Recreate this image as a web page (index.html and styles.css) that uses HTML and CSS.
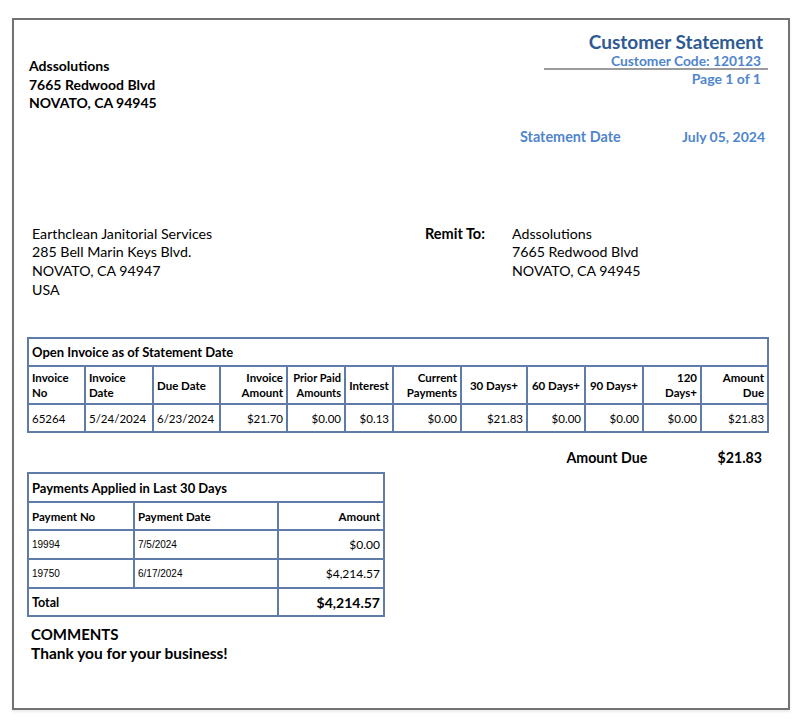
FILE: index.html
```html
<!DOCTYPE html>
<html lang="en">
<head>
<meta charset="utf-8">
<title>Customer Statement</title>
<link rel="stylesheet" href="styles.css">
</head>
<body>
<div class="page">
  <div class="head">
    <div class="from">
      <div>Adssolutions</div>
      <div>7665 Redwood Blvd</div>
      <div>NOVATO, CA 94945</div>
    </div>
    <div class="titlebox">
      <div class="title">Customer Statement</div>
      <div class="code">Customer Code: 120123</div>
      <div class="pageno">Page 1 of 1</div>
    </div>
  </div>
  <div class="daterow">
    <span class="dlabel">Statement Date</span>
    <span class="dval">July 05, 2024</span>
  </div>
  <div class="addrs">
    <div class="to">
      <div>Earthclean Janitorial Services</div>
      <div>285 Bell Marin Keys Blvd.</div>
      <div>NOVATO, CA 94947</div>
      <div>USA</div>
    </div>
    <div class="remit-label">Remit To:</div>
    <div class="remit">
      <div>Adssolutions</div>
      <div>7665 Redwood Blvd</div>
      <div>NOVATO, CA 94945</div>
    </div>
  </div>

  <table class="inv">
    <colgroup>
      <col class="c57"><col class="c68"><col class="c67"><col class="c67"><col class="c58"><col class="c48">
      <col class="c68"><col class="c66"><col class="c58"><col class="c58"><col class="c58"><col class="c67">
    </colgroup>
    <tr class="trow"><td colspan="12">Open Invoice as of Statement Date</td></tr>
    <tr class="hrow">
      <th class="l">Invoice<br>No</th>
      <th class="l">Invoice<br>Date</th>
      <th class="l">Due Date</th>
      <th class="r">Invoice<br>Amount</th>
      <th class="r small">Prior Paid<br>Amounts</th>
      <th class="c">Interest</th>
      <th class="r">Current<br>Payments</th>
      <th class="c">30 Days+</th>
      <th class="c">60 Days+</th>
      <th class="c">90 Days+</th>
      <th class="r">120<br>Days+</th>
      <th class="r">Amount<br>Due</th>
    </tr>
    <tr class="drow">
      <td class="l">65264</td>
      <td class="l">5/24/2024</td>
      <td class="l">6/23/2024</td>
      <td class="r">$21.70</td>
      <td class="r">$0.00</td>
      <td class="r">$0.13</td>
      <td class="r">$0.00</td>
      <td class="r">$21.83</td>
      <td class="r">$0.00</td>
      <td class="r">$0.00</td>
      <td class="r">$0.00</td>
      <td class="r">$21.83</td>
    </tr>
  </table>

  <div class="duerow">
    <span class="duelabel">Amount Due</span>
    <span class="dueval">$21.83</span>
  </div>

  <table class="pay">
    <colgroup><col class="p1"><col class="p2"><col class="p3"></colgroup>
    <tr class="trow"><td colspan="3">Payments Applied in Last 30 Days</td></tr>
    <tr class="phrow">
      <th class="l">Payment No</th>
      <th class="l">Payment Date</th>
      <th class="r">Amount</th>
    </tr>
    <tr class="prow">
      <td class="l arial">19994</td>
      <td class="l arial">7/5/2024</td>
      <td class="r">$0.00</td>
    </tr>
    <tr class="prow">
      <td class="l arial">19750</td>
      <td class="l arial">6/17/2024</td>
      <td class="r">$4,214.57</td>
    </tr>
    <tr class="totrow">
      <td class="l" colspan="2">Total</td>
      <td class="r">$4,214.57</td>
    </tr>
  </table>

  <div class="comments">
    <div class="ctitle">COMMENTS</div>
    <div class="ctext">Thank you for your business!</div>
  </div>
</div>
</body>
</html>
```

FILE: styles.css
```css
* { box-sizing: border-box; }
html, body { margin: 0; padding: 0; background: #fff; }
body {
  font-family: Lato, "Open Sans", sans-serif;
  color: #000;
  width: 800px;
  height: 726px;
}
.page {
  margin: 18px 0 0 12px;
  width: 778px;
  height: 692px;
  border: 2px solid #727272;
  box-shadow: 0 2px 2px rgba(0,0,0,0.08);
}
.head {
  display: flex;
  justify-content: space-between;
  align-items: flex-start;
}
.from {
  padding: 37px 0 0 15px;
  font-weight: 700;
  font-size: 14px;
  line-height: 18.5px;
}
.titlebox {
  width: 224px;
  margin-right: 20px;
  padding-top: 11px;
  text-align: right;
  font-weight: 700;
}
.title {
  color: #2f5b93;
  font-size: 19px;
  line-height: 22px;
  padding-right: 5px;
}
.code {
  color: #4f85cc;
  font-size: 13.8px;
  line-height: 15px;
  padding-right: 7px;
  border-bottom: 2px solid #9c9c9c;
}
.pageno {
  color: #4f85cc;
  font-size: 14px;
  line-height: 18px;
  padding-right: 7px;
}
.daterow {
  display: flex;
  justify-content: flex-end;
  margin-top: 15px;
  padding-right: 23px;
  color: #4f85cc;
  font-weight: 700;
  font-size: 14px;
  line-height: 18px;
}
.dlabel { width: 162px; font-size: 14.4px; }
.addrs {
  display: flex;
  margin-top: 79px;
  font-size: 14.2px;
  line-height: 18.7px;
}
.to { width: 411px; padding-left: 18px; }
.remit-label { width: 87px; font-weight: 700; font-size: 14.5px; }
table {
  border-collapse: collapse;
  table-layout: fixed;
  margin-left: 13px;
}
td, th {
  border: 2px solid #5f7ca9;
  padding: 0 3px;
  overflow: hidden;
  white-space: nowrap;
}
.l { text-align: left; }
.r { text-align: right; }
.c { text-align: center; }
.inv { width: 740px; margin-top: 38px; }
.c57 { width: 57px; } .c68 { width: 68px; } .c67 { width: 67px; }
.c58 { width: 58px; } .c48 { width: 48px; } .c66 { width: 66px; }
.trow td {
  font-weight: 700;
  font-size: 13px;
  height: 28px;
}
.hrow th {
  font-size: 11.5px;
  line-height: 15px;
  height: 38px;
  font-weight: 700;
}
.hrow th.small { font-size: 11px; }
.drow td { font-size: 11.5px; height: 28px; }
.duerow {
  display: flex;
  justify-content: flex-end;
  margin-top: 16px;
  padding-right: 26px;
  font-weight: 700;
  font-size: 14.2px;
  line-height: 18px;
}
.duelabel { width: 151px; }
.pay { width: 356px; margin-top: 5px; }
.p1 { width: 106px; } .p2 { width: 144px; } .p3 { width: 106px; }
.pay .trow td { height: 29px; }
.phrow th { font-size: 11.5px; font-weight: 700; height: 28px; }
.prow td { font-size: 12px; height: 29px; }
.prow td.arial { font-family: "Liberation Sans", Arial, sans-serif; font-size: 10px; }
.totrow td { height: 28px; font-weight: 700; font-size: 12.5px; }
.totrow td.r { font-size: 14px; border-left-color: #a9b8cf; }
.comments { padding: 8px 0 0 17px; font-weight: 700; }
.ctitle { font-size: 15px; line-height: 19px; }
.ctext { font-size: 15.5px; line-height: 19px; }
```
